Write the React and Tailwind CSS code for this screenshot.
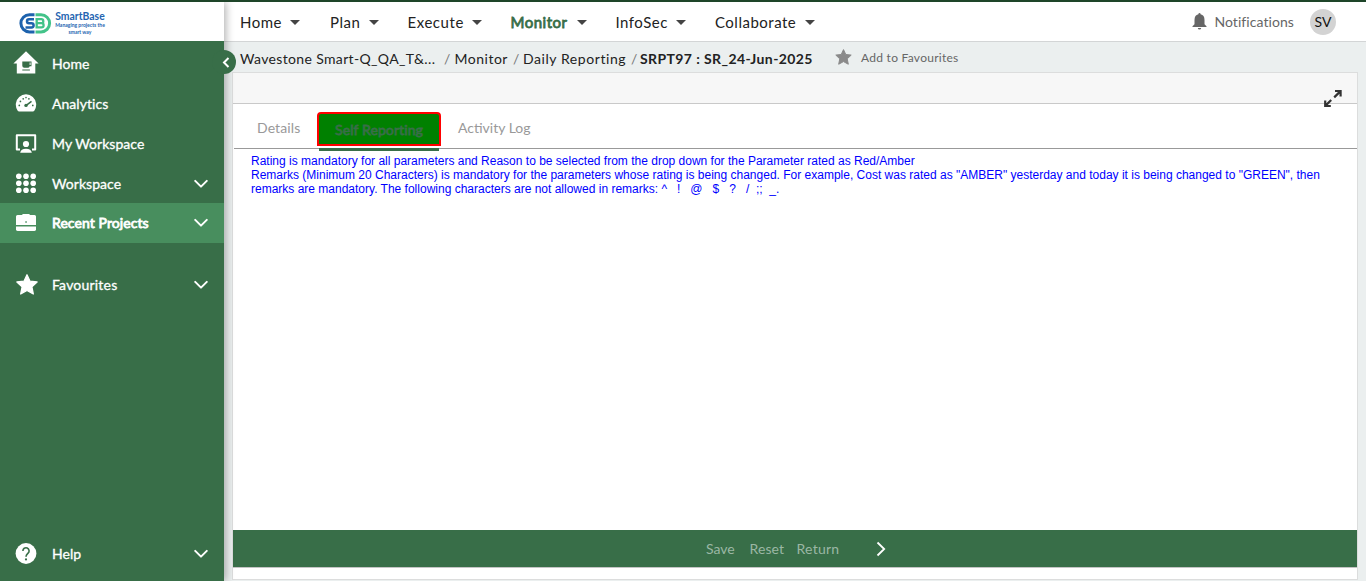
import React from "react";

const NAV = [
  { label: "Home", box: "w-[90px]", text: "tracking-[0.5px]" },
  { label: "Plan", box: "w-[77.5px]", text: "tracking-[0.5px]" },
  { label: "Execute", box: "w-[103px]", text: "tracking-[0.55px]" },
  { label: "Monitor", box: "w-[105px]", text: "mr-[1px] tracking-[0.5px] text-[#386e48] [-webkit-text-stroke:0.8px_#386e48]" },
  { label: "InfoSec", box: "w-[99.5px]", text: "tracking-[0.5px]" },
  { label: "Collaborate", box: "w-[110px]", text: "tracking-[0.5px]" },
];

function HomeIcon() {
  return (
    <svg className="h-6 w-[26px] overflow-visible" viewBox="0 0 26 24" fill="#fff">
      <path d="M13 -0.8 25.6 11.6H22.3V21.6H3.8V11.6H0.4Z" />
      <path d="M9.3 9.4h9.2v4.8h-1.8a2 2 0 0 1-2 1.6h-3.4a2 2 0 0 1-2-2ZM9.3 17.4h7.6v1H9.3Z" fill="#386e48" />
      <path d="M16.6 10.5h1v2.4h-1Z" />
    </svg>
  );
}

function GaugeIcon() {
  return (
    <svg className="h-6 w-[26px]" viewBox="0 0 26 24">
      <path d="M4.7 19.4A10.2 10.2 0 1 1 21.3 19.4Q20.8 20 19.9 20H6.1Q5.2 20 4.7 19.4Z" transform="translate(0 -1) scale(1 1.02)" fill="#fff" />
      <g fill="#386e48">
        <circle cx="6.3" cy="13.4" r=".85" />
        <circle cx="7.4" cy="9.4" r=".85" />
        <circle cx="10.2" cy="6.8" r=".85" />
        <circle cx="13" cy="5.6" r=".8" />
        <circle cx="15.9" cy="6.8" r=".85" />
        <circle cx="19.8" cy="13.4" r=".85" />
        <circle cx="13" cy="13.4" r="1.7" />
      </g>
      <path d="m13.2 13.3 5.3-4" stroke="#386e48" strokeWidth="1.5" />
    </svg>
  );
}

function PersonScreenIcon() {
  return (
    <svg className="h-6 w-[26px]" viewBox="0 0 26 24">
      <path d="M7 17.6H3.8V3.2H22.2V17.6H19" fill="none" stroke="#fff" strokeWidth="2" strokeLinejoin="round" />
      <circle cx="13" cy="12" r="3.1" fill="#fff" />
      <path d="M7.2 20.8q.6-4.1 5.8-4.1t5.8 4.1Z" fill="#fff" />
    </svg>
  );
}

function GridIcon() {
  return (
    <svg className="h-6 w-[26px]" viewBox="0 0 26 24" fill="#fff">
      {[4.2, 11.2, 18.3].map((y) =>
        [5.8, 13, 20.2].map((x) => <circle key={`${x}-${y}`} cx={x} cy={y} r="2.8" />)
      )}
    </svg>
  );
}

function BriefcaseIcon() {
  return (
    <svg className="h-6 w-[26px]" viewBox="0 0 26 24" fill="#fff">
      <path d="M10 3h6l1.2 1H21.5Q23 4 23 5.5V14H3V5.5Q3 4 4.5 4H8.8Z" />
      <path d="M3 15.6H23V18.6Q23 20 21.5 20H4.5Q3 20 3 18.6Z" />
      <path d="M12.3 10.3h1.5v1.5h-1.5Z" fill="#488e5e" />
    </svg>
  );
}

function StarShape({ className }) {
  return (
    <svg className={className} viewBox="0 0 22 21" fill="currentColor">
      <path d="M11 .8 14 7.2 21.1 8 15.9 12.9 17.3 20 11 16.5 4.7 20 6.1 12.9.9 8 8 7.2Z" stroke="currentColor" strokeWidth="1.3" strokeLinejoin="round" />
    </svg>
  );
}

function HelpIcon() {
  return (
    <svg className="h-6 w-[26px]" viewBox="0 0 26 24">
      <circle cx="13" cy="11.5" r="10.4" fill="#fff" />
      <path d="M9.9 8.9a3.1 3.1 0 1 1 5.2 2.2c-1.4 1.3-2.1 1.8-2.1 3.6" fill="none" stroke="#386e48" strokeWidth="1.6" />
      <circle cx="13" cy="17.4" r="1.1" fill="#386e48" />
    </svg>
  );
}

function Chevron() {
  return (
    <svg className="ml-auto mr-[15px] h-[10px] w-4" viewBox="0 0 16 10" fill="none" stroke="#fff" strokeWidth="2" strokeLinecap="round" strokeLinejoin="round">
      <path d="M2.2 1.9 8 7.6 13.8 1.9" />
    </svg>
  );
}

function SideItem({ icon, label, expandable, className = "", text = "" }) {
  return (
    <div className={`flex h-10 shrink-0 items-center pl-[13px] ${className}`}>
      {icon}
      <span className={`ml-[13px] text-[14px] leading-5 ${text || "tracking-[0.05px] [-webkit-text-stroke:0.3px_#fff]"}`}>{label}</span>
      {expandable && <Chevron />}
    </div>
  );
}

function Logo() {
  return (
    <div className="flex h-[39px] shrink-0 bg-white pl-[18px] pt-[9px]">
      <svg className="mt-[1px] h-[23px] w-[35px]" viewBox="0 0 34 23" fill="none">
        <path d="M16 2.7H11a8.6 8.6 0 0 0 0 17.2h5" stroke="#1d62ad" strokeWidth="3" />
        <path d="M17 2.7H22.5a8.6 8.6 0 0 1 0 17.2H17" stroke="#43c389" strokeWidth="3" />
        <path d="M15.5 7.2h-5a1.9 1.9 0 0 0 0 4h2.5a2 2 0 0 1 0 4.2H7" stroke="#1d62ad" strokeWidth="2.5" />
        <path d="M17 7.2h5.8a1.9 1.9 0 0 1 0 4H17h6a2.1 2.1 0 0 1 0 4.2h-6M18.2 7v8.6" stroke="#43c389" strokeWidth="2.3" />
      </svg>
      <div className="ml-[1px] flex w-[52px] flex-col items-center whitespace-nowrap font-bold text-[#2464b0]">
        <span className="text-[10.4px] leading-[11px]">SmartBase</span>
        <span className="text-[5px] leading-[7px]">Managing projects the</span>
        <span className="text-[5px] leading-[6px]">smart way</span>
      </div>
    </div>
  );
}

function Sidebar() {
  return (
    <aside className="relative z-10 flex w-[224px] shrink-0 flex-col bg-[#386e48] text-white shadow-[2px_0_8px_rgba(0,0,0,0.3)]">
      <Logo />
      <div className="h-[3px] shrink-0" />
      <SideItem icon={<HomeIcon />} label="Home" />
      <SideItem icon={<GaugeIcon />} label="Analytics" />
      <SideItem icon={<PersonScreenIcon />} label="My Workspace" />
      <SideItem icon={<GridIcon />} label="Workspace" expandable className="-mb-[1px]" />
      <SideItem icon={<BriefcaseIcon />} label="Recent Projects" expandable className="bg-[#488e5e]" text="tracking-[0.08px] [-webkit-text-stroke:0.8px_#fff]" />
      <SideItem icon={<StarShape className="-mt-[2px] ml-[3px] mr-[1px] h-[21px] w-[22px]" />} label="Favourites" expandable className="mt-[22px]" text="tracking-[0.2px] [-webkit-text-stroke:0.3px_#fff]" />
      <SideItem icon={<HelpIcon />} label="Help" expandable className="mt-auto mb-[7px]" />
    </aside>
  );
}

function TopBar() {
  return (
    <header className="flex h-[40px] shrink-0 items-center border-b border-[#d3d5d6] bg-white pl-4">
      {NAV.map((n) => (
        <div key={n.label} className={`flex items-center whitespace-nowrap pt-[2px] text-[15px] ${n.box}`}>
          <span className={n.text}>{n.label}</span>
          <span className="ml-[8.5px] h-0 w-0 border-x-[5px] border-t-[5px] border-x-transparent border-t-[#444]" />
        </div>
      ))}
      <div className="ml-auto flex items-center pr-[30px]">
        <svg className="mr-[7px] h-[17px] w-[15px]" viewBox="0 0 15 17" fill="#666">
          <path d="M7.5 0q1.1 0 1.1 1.2Q12.5 2 12.5 7v4.3l2 2V14H.5v-.7l2-2V7Q2.5 2 6.4 1.2 6.4 0 7.5 0ZM5.8 15h3.4q-.2 1.6-1.7 1.6T5.8 15Z" />
        </svg>
        <span className="text-[14px] tracking-[0.07px] text-[#666]">Notifications</span>
        <span className="ml-4 flex h-[26px] w-[26px] items-center justify-center rounded-full bg-[#d3d3d3] text-[14px] text-[#111]">SV</span>
      </div>
    </header>
  );
}

function Slash({ className }) {
  return <span className={`text-[14px] text-[#777] ${className}`}>/</span>;
}

function Breadcrumb() {
  return (
    <div className="flex h-[30px] shrink-0 items-center whitespace-nowrap pl-4 pt-[2px] text-[14px]">
      <span className="w-[204px] tracking-[0.35px]">Wavestone Smart-Q_QA_T&amp;...</span>
      <Slash className="w-[10.5px]" />
      <span className="w-[58.5px] tracking-[0.5px]">Monitor</span>
      <Slash className="w-[10px]" />
      <span className="w-[108px] tracking-[0.57px]">Daily Reporting</span>
      <Slash className="w-[9px]" />
      <span className="w-[195px] font-bold tracking-[0.4px]">SRPT97 : SR_24-Jun-2025</span>
      <StarShape className="-mt-[3px] h-4 w-[17px] text-[#8a8a8a]" />
      <span className="-mt-[1px] ml-[9px] text-[12px] tracking-[0.27px] text-[#666]">Add to Favourites</span>
    </div>
  );
}

function Panel() {
  return (
    <section className="ml-2 flex h-[508px] w-[1126px] flex-col border border-[#dcdddd] bg-white">
      <div className="relative h-[31px] shrink-0 border-b border-[#c9c9c9] bg-[#f7f7f7]">
        <svg className="absolute right-[14px] top-[15px] h-5 w-5" viewBox="0 0 20 20" fill="none" stroke="#333" strokeWidth="2.2">
          <path d="M12 3h5.6v5.6M17 3.6l-5.8 5.8M7.8 18H2.2v-5.6M2.8 17.4l5.4-5.4" />
        </svg>
      </div>
      <div className="ml-px flex h-[45px] shrink-0 border-b border-[#999] text-[14px] text-[#999]">
        <div className="w-[83px] pl-[23px] pt-[13px] tracking-[0.1px]">Details</div>
        <div className="flex h-[46px] w-[124px] flex-col items-center pt-2">
          <div className="h-[34px] w-full shrink-0 rounded-t-[4px] border-2 border-[#f00] bg-[#008000] pt-[6px] text-center leading-5 tracking-[0.1px] text-[#386e48] [-webkit-text-stroke:0.8px_#386e48]">Self Reporting</div>
          <div className="mt-[2px] h-[3px] w-[120px] shrink-0 bg-[#386e48]" />
        </div>
        <div className="pl-[17px] pt-[13px]">Activity Log</div>
      </div>
      <div className="whitespace-nowrap pl-[18px] pt-[5px] font-['Liberation_Sans',Arial,sans-serif] text-[12px] leading-[14px] text-[#0000ff]">
        <p>Rating is mandatory for all parameters and Reason to be selected from the drop down for the Parameter rated as Red/Amber</p>
        <p>Remarks (Minimum 20 Characters) is mandatory for the parameters whose rating is being changed. For example, Cost was rated as "AMBER" yesterday and today it is being changed to "GREEN", then</p>
        <p className="whitespace-pre">remarks are mandatory. The following characters are not allowed in remarks: ^   !   @   $   ?   /  ;;  _.</p>
      </div>
      <footer className="mt-auto mb-[11px] flex h-[38px] shrink-0 items-center border-b border-[#c4c4c4] bg-[#386e48] pl-[473px] text-[14px] text-[#9bb7a4]">
        <span className="w-[43.5px]">Save</span>
        <span className="w-[47px] tracking-[0.1px]">Reset</span>
        <span className="w-[79.5px] tracking-[0.25px]">Return</span>
        <svg className="h-4 w-[10px]" viewBox="0 0 10 16" fill="none" stroke="#fff" strokeWidth="1.8">
          <path d="M1.5 1.5 8.2 8 1.5 14.5" />
        </svg>
      </footer>
    </section>
  );
}

export default function App() {
  return (
    <div className="flex h-[581px] w-[1366px] overflow-hidden border-t-2 border-[#1e4529] bg-[#ebefef] font-['Lato',sans-serif] text-[#222]">
      <Sidebar />
      <main className="relative flex min-w-0 flex-1 flex-col">
        <TopBar />
        <Breadcrumb />
        <Panel />
      </main>
      <button className="absolute left-[212px] top-[50px] z-20 flex h-6 w-6 items-center justify-center rounded-full bg-[#386e48]" aria-label="Collapse">
        <svg className="ml-[4px] h-[11px] w-2" viewBox="0 0 8 11" fill="none" stroke="#fff" strokeWidth="2">
          <path d="M6.5 1 2 5.5 6.5 10" />
        </svg>
      </button>
    </div>
  );
}
